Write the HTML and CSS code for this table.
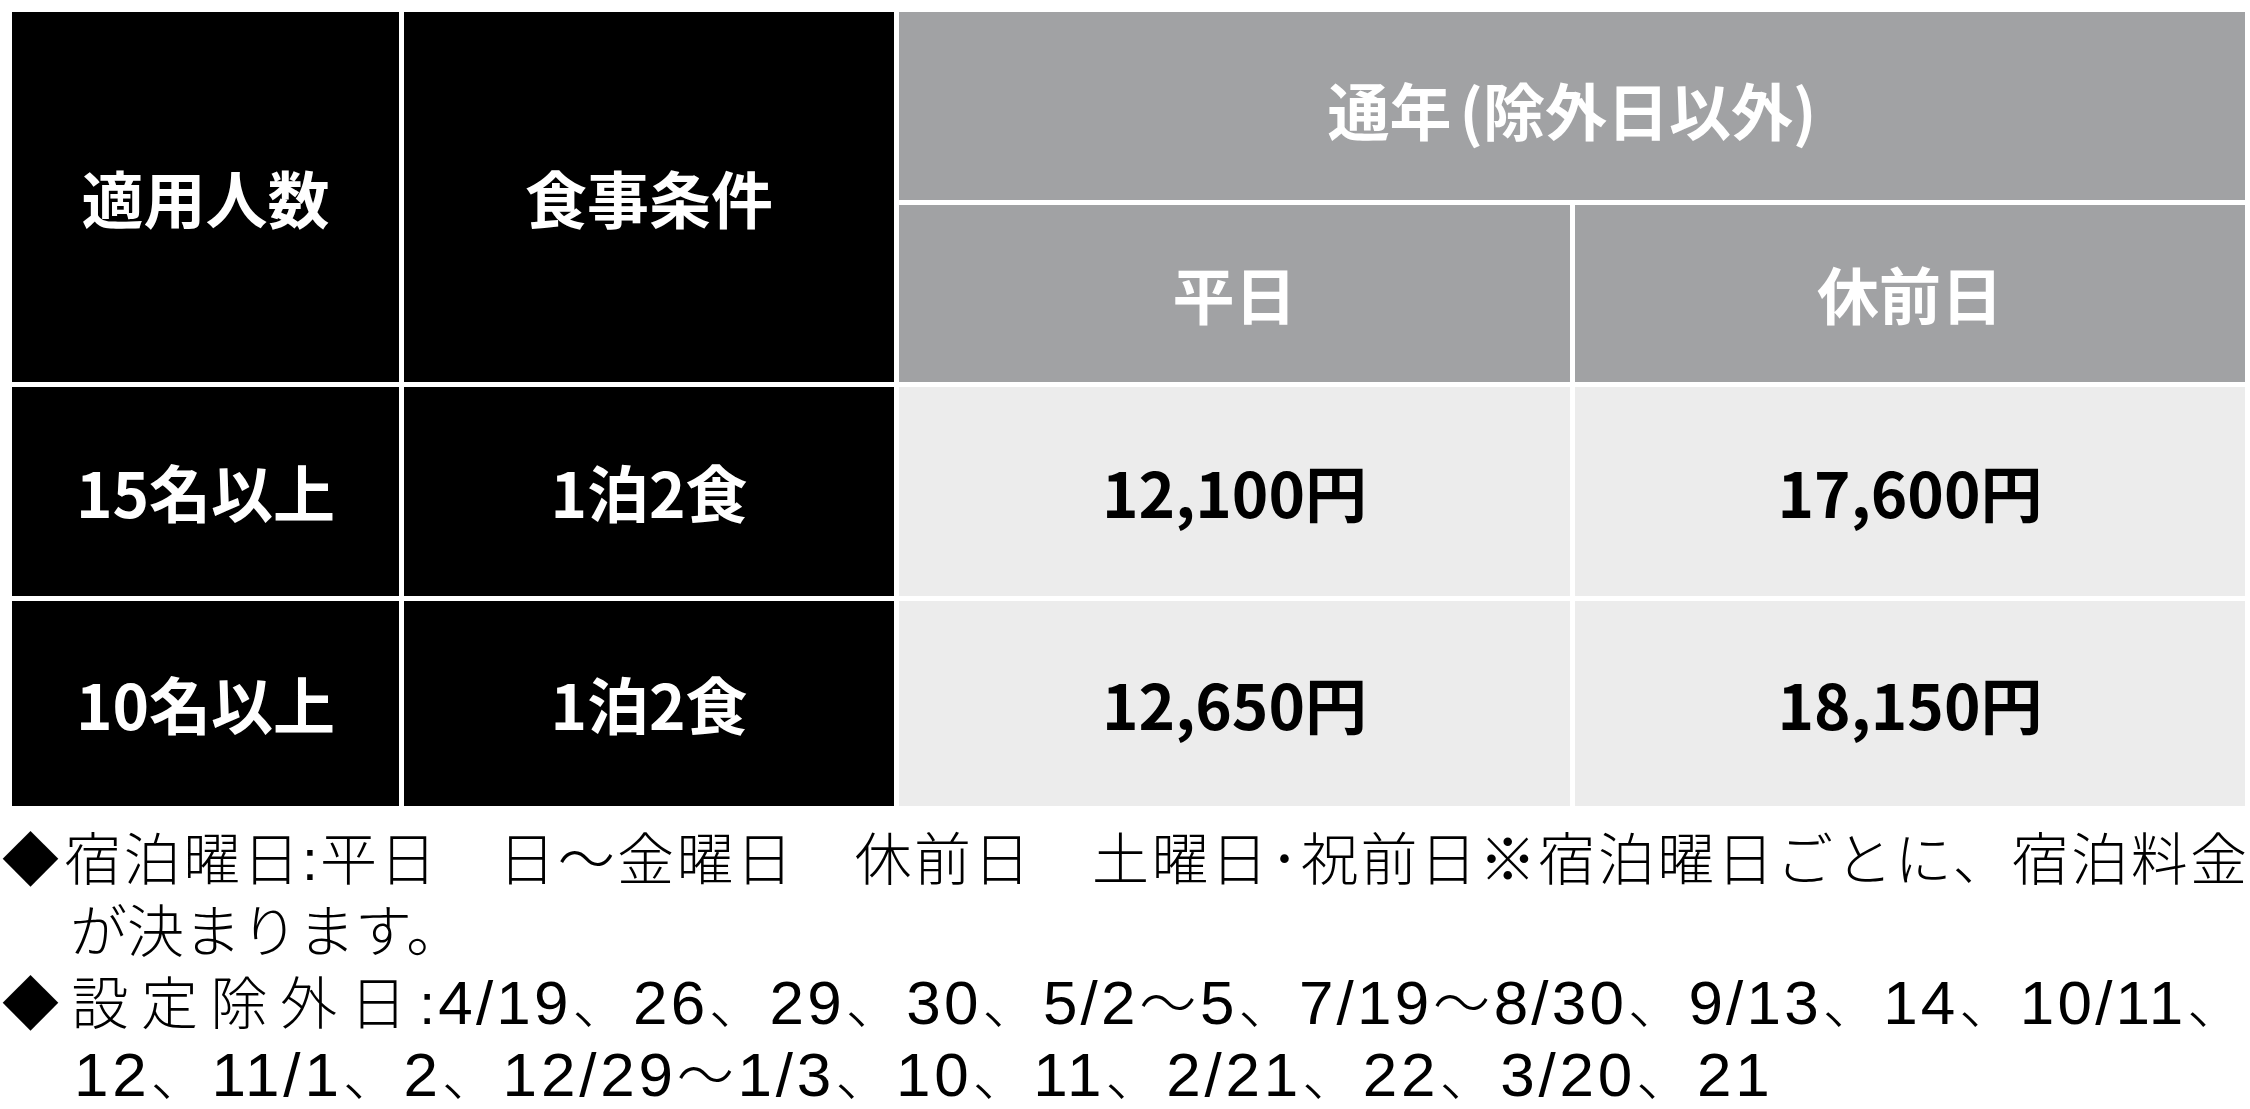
FILE: index.html
```html
<!DOCTYPE html>
<html lang="ja">
<head>
<meta charset="utf-8">
<title>宿泊料金</title>
<link rel="stylesheet" href="styles.css">
</head>
<body>
<div class="page">
  <div class="rate-table">
    <div class="cell cell--dark cell--tall">適用人数</div>
    <div class="cell cell--dark cell--tall">食事条件</div>
    <div class="cell cell--gray cell--wide cell--season">通年<span class="paren-gap">(</span>除外日以外)</div>
    <div class="cell cell--gray">平日</div>
    <div class="cell cell--gray">休前日</div>

    <div class="cell cell--dark">15名以上</div>
    <div class="cell cell--dark">1泊2食</div>
    <div class="cell cell--light">12,100円</div>
    <div class="cell cell--light">17,600円</div>

    <div class="cell cell--dark">10名以上</div>
    <div class="cell cell--dark">1泊2食</div>
    <div class="cell cell--light">12,650円</div>
    <div class="cell cell--light">18,150円</div>
  </div>

  <div class="notes">
    <p class="note">
      <span class="note-line note-line--full"><span class="note-mark">◆</span>宿泊曜日:平日　日〜金曜日　休前日　土曜日･祝前日※宿泊曜日ごとに、宿泊料金</span>
      <span class="note-line note-line--cont">が決まります。</span>
    </p>
    <p class="note">
      <span class="note-line note-line--full note-line--dates note-line--first-dates"><span class="note-label">◆設定除外日</span>:<span class="num">4/19</span>、<span class="num">26</span>、<span class="num">29</span>、<span class="num">30</span>、<span class="num">5/2</span>〜<span class="num">5</span>、<span class="num">7/19</span>〜<span class="num">8/30</span>、<span class="num">9/13</span>、<span class="num">14</span>、<span class="num">10/11</span>、</span>
      <span class="note-line note-line--digits note-line--dates"><span class="num">12</span>、<span class="num">11/1</span>、<span class="num">2</span>、<span class="num">12/29</span>〜<span class="num">1/3</span>、<span class="num">10</span>、<span class="num">11</span>、<span class="num">2/21</span>、<span class="num">22</span>、<span class="num">3/20</span>、<span class="num">21</span></span>
    </p>
  </div>
</div>
</body>
</html>
```

FILE: styles.css
```css
* {
  box-sizing: border-box;
}

html, body {
  margin: 0;
  padding: 0;
  background: #ffffff;
}

body {
  font-family: "Noto Sans CJK JP", "Noto Sans", sans-serif;
  color: #000000;
}

.page {
  width: 2250px;
  padding: 12px 0 0 0;
}

.rate-table {
  display: grid;
  grid-template-columns: 387px 490px 671px 670px;
  grid-template-rows: 188px 177px 209px 205px;
  gap: 5px;
  margin-left: 12px;
}

.cell {
  display: flex;
  align-items: center;
  justify-content: center;
  font-size: 62px;
  font-weight: 700;
  line-height: 1.2;
  white-space: nowrap;
}

.cell--dark {
  background: #000000;
  color: #ffffff;
}

.cell--gray {
  background: #a1a2a4;
  color: #ffffff;
}

.cell--light {
  background: #ececec;
  color: #000000;
}

.cell--tall {
  grid-row: span 2;
}

.cell--wide {
  grid-column: span 2;
}

.cell--season {
  padding-top: 6px;
}

.paren-gap {
  margin-left: 8px;
}

.notes {
  margin: 18px 3px 0 2px;
}

.note {
  margin: 0;
}

.note-line {
  display: block;
  font-family: "Liberation Sans", "Noto Sans CJK JP", sans-serif;
  font-size: 57px;
  font-weight: 300;
  line-height: 72px;
  white-space: nowrap;
}

.note-line--full {
  text-align: justify;
  text-align-last: justify;
}

.note-line--cont {
  padding-left: 68px;
}

.note-line--digits {
  padding-left: 72px;
}

.note-line--dates {
  letter-spacing: 3.8px;
}

.note-line--first-dates {
  letter-spacing: 3.2px;
}

.note-mark {
  margin-right: 3px;
}

.note-label {
  letter-spacing: 12px;
}

.num {
  font-size: 62px;
  line-height: 1;
}
```
